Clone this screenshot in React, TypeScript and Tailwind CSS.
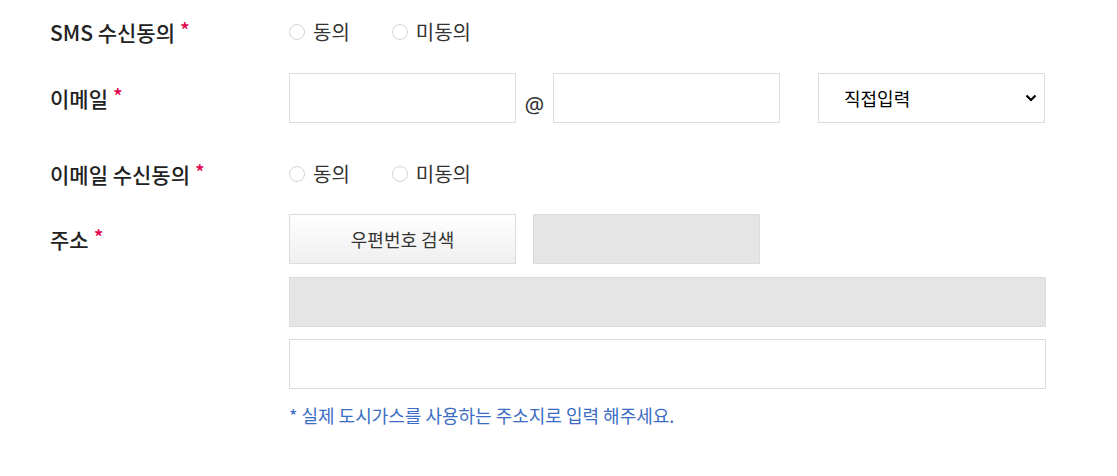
import React from 'react';

function Label({ text }: { text: string }) {
  return (
    <div
      className="w-[239px] shrink-0 text-[21px] text-[#222] leading-none flex items-center"
      style={{ fontFamily: '"Noto Sans CJK KR Medium", "Noto Sans CJK KR", sans-serif' }}
    >
      <span>{text}</span>
      <span className="ml-[5px] -mt-[4px] text-[#e4004f] text-[20px]">*</span>
    </div>
  );
}

function Radio({ name, label, checked }: { name: string; label: string; checked?: boolean }) {
  return (
    <label className="flex items-center text-[20px] leading-none text-[#333] cursor-pointer">
      <input
        type="radio"
        name={name}
        defaultChecked={checked}
        className="appearance-none w-[16px] h-[16px] rounded-full border border-[#d4d4d4] bg-white checked:border-[5px] checked:border-[#333] mr-[8px]"
      />
      {label}
    </label>
  );
}

function AgreeRadios({ name }: { name: string }) {
  return (
    <div className="flex items-center gap-[42px]">
      <Radio name={name} label="동의" />
      <Radio name={name} label="미동의" />
    </div>
  );
}

export default function App() {
  const box = 'h-[50px] border border-[#dcdcdc] outline-none px-3 text-[18px] text-[#333]';

  return (
    <div
      className="w-[1117px] h-[476px] bg-white pl-[50px] pt-[12px]"
      style={{ fontFamily: '"Noto Sans CJK KR", "Noto Sans", sans-serif' }}
    >
      {/* SMS 수신동의 */}
      <div className="flex h-[40px] items-center">
        <Label text="SMS 수신동의" />
        <AgreeRadios name="sms" />
      </div>

      {/* 이메일 */}
      <div className="flex mt-[21px] h-[50px] items-center">
        <Label text="이메일" />
        <div className="flex items-center">
          <input className={`${box} w-[227px] bg-white`} />
          <span
            className="w-[37px] text-center text-[22px] text-[#333] pt-[12px]"
            style={{ fontFamily: '"Noto Sans", sans-serif' }}
          >
            @
          </span>
          <input className={`${box} w-[227px] bg-white`} />
          <div className="relative ml-[38px] w-[227px]">
            <select className={`${box} w-full appearance-none bg-white pl-[25px] text-[18px] text-black`}>
              <option>직접입력</option>
              <option>naver.com</option>
              <option>gmail.com</option>
              <option>daum.net</option>
            </select>
            <svg
              className="absolute right-[8px] top-1/2 -translate-y-1/2 pointer-events-none"
              width="12"
              height="8"
              viewBox="0 0 12 8"
            >
              <path d="M1.5 1.5 L6 6 L10.5 1.5" fill="none" stroke="#000" strokeWidth="2.2" />
            </svg>
          </div>
        </div>
      </div>

      {/* 이메일 수신동의 */}
      <div className="flex mt-[31px] h-[40px] items-center">
        <Label text="이메일 수신동의" />
        <AgreeRadios name="email" />
      </div>

      {/* 주소 */}
      <div className="flex mt-[20px]">
        <div className="h-[50px] flex items-center">
          <Label text="주소" />
        </div>
        <div className="flex flex-col w-[757px]">
          <div className="flex gap-[17px]">
            <button className="w-[227px] h-[50px] border border-[#dcdcdc] bg-gradient-to-b from-white to-[#efefef] text-[18px] text-[#333]">
              우편번호 검색
            </button>
            <input readOnly className={`${box} w-[227px] bg-[#e5e5e5]`} />
          </div>
          <input readOnly className={`${box} w-full mt-[13px] bg-[#e5e5e5]`} />
          <input className={`${box} w-full mt-[12px] bg-white`} />
          <p className="mt-[13px] text-[18px] leading-[26px] text-[#3b6dc5]">
            * 실제 도시가스를 사용하는 주소지로 입력 해주세요.
          </p>
        </div>
      </div>
    </div>
  );
}
